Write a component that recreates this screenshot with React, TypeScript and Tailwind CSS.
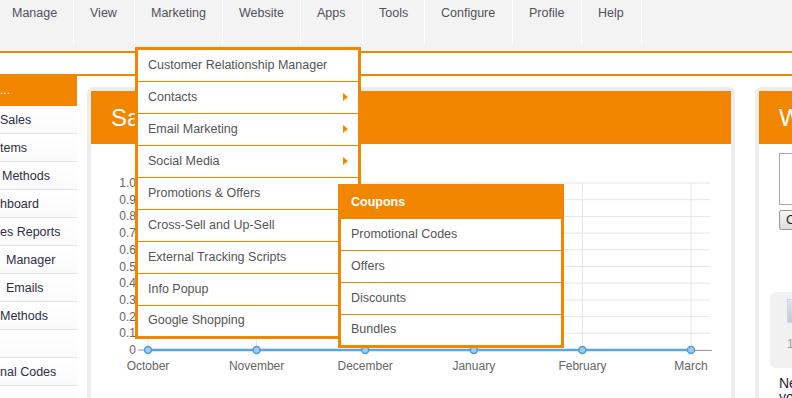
const navItems = [
  { label: 'Manage', cls: 'w-[74px] pl-[12px]' },
  { label: 'View', cls: 'w-[61px] pl-[16px]' },
  { label: 'Marketing', cls: 'w-[88px] pl-[16px]' },
  { label: 'Website', cls: 'w-[78px] pl-[16px]' },
  { label: 'Apps', cls: 'w-[62px] pl-[16px]' },
  { label: 'Tools', cls: 'w-[62px] pl-[16px]' },
  { label: 'Configure', cls: 'w-[88px] pl-[16px]' },
  { label: 'Profile', cls: 'w-[69px] pl-[16px]' },
  { label: 'Help', cls: 'w-[60px] pl-[16px]' },
];

const sideItems = [
  { label: 'Sales', cls: 'pl-0' },
  { label: 'tems', cls: 'pl-0' },
  { label: 'Methods', cls: 'pl-[2px]' },
  { label: 'hboard', cls: 'pl-0' },
  { label: 'es Reports', cls: 'pl-0' },
  { label: 'Manager', cls: 'pl-[6px]' },
  { label: 'Emails', cls: 'pl-[6px]' },
  { label: 'Methods', cls: 'pl-0' },
  { label: '', cls: 'pl-0' },
  { label: 'nal Codes', cls: 'pl-0' },
  { label: '', cls: 'pl-0' },
];

const marketingItems = [
  { label: 'Customer Relationship Manager', sub: false },
  { label: 'Contacts', sub: true },
  { label: 'Email Marketing', sub: true },
  { label: 'Social Media', sub: true },
  { label: 'Promotions & Offers', sub: false },
  { label: 'Cross-Sell and Up-Sell', sub: false },
  { label: 'External Tracking Scripts', sub: false },
  { label: 'Info Popup', sub: false },
  { label: 'Google Shopping', sub: false },
];

const couponItems = ['Promotional Codes', 'Offers', 'Discounts', 'Bundles'];

const months = ['October', 'November', 'December', 'January', 'February', 'March'];
const ticks = [1.0, 0.9, 0.8, 0.7, 0.6, 0.5, 0.4, 0.3, 0.2, 0.1, 0];

function SalesChart() {
  const x = (i: number) => 57 + i * 108.6;
  const y = (v: number) => 206 - v * 167;
  return (
    <svg width="640" height="260" className="block">
      {ticks.map((t) => (
        <g key={t}>
          <line x1="57" x2="619" y1={y(t)} y2={y(t)} stroke="#e6e6e6" strokeWidth="1" />
          <line x1="47" x2="56" y1={y(t)} y2={y(t)} stroke="#999" strokeWidth="1" />
          <text x="45" y={y(t) + 4} textAnchor="end" fontSize="12" fill="#666">
            {t === 0 ? '0' : t.toFixed(1)}
          </text>
        </g>
      ))}
      {months.map((m, i) => (
        <g key={m}>
          <line x1={x(i)} x2={x(i)} y1="39" y2="206" stroke="#e6e6e6" strokeWidth="1" />
          <text x={x(i)} y="226" textAnchor="middle" fontSize="12" fill="#666">
            {m}
          </text>
        </g>
      ))}
      <line x1="57" x2="621" y1="206.5" y2="206.5" stroke="#999" strokeWidth="1" />
      <line x1={x(0)} x2={x(5)} y1="206" y2="206" stroke="#5aa6e4" strokeWidth="2.5" />
      {months.map((m, i) => (
        <circle key={m} cx={x(i)} cy="206" r="3.5" fill="#9ecbf0" stroke="#4c9de0" strokeWidth="1.5" />
      ))}
    </svg>
  );
}

export default function App() {
  return (
    <div className="relative w-[792px] h-[398px] overflow-hidden bg-white font-['Liberation_Sans',Arial,sans-serif]">
      {/* top menu */}
      <nav className="flex h-[50px] bg-[#f3f3f3]">
        {navItems.map((n) => (
          <div key={n.label} className={`${n.cls} h-[44px] shrink-0 border-r border-white pt-[6px] text-[12.5px] leading-[15px] text-[#50505e]`}>
            {n.label}
          </div>
        ))}
      </nav>
      <div className="mt-[1px] h-[25px] border-y-2 border-[#f28600]" />

      <div className="flex">
        {/* sidebar */}
        <aside className="w-[77px] shrink-0 overflow-hidden">
          <div className="h-[30px] bg-[#f28600] text-[12px] leading-[28px] text-white">...</div>
          {sideItems.map((s, i) => (
            <div key={i} className={`${s.cls} flex h-[28px] items-center whitespace-nowrap border-b border-[#e6e6e6] bg-gradient-to-b from-white to-[#fafafa] pt-[1px] text-[12.5px] text-[#2e2e48]`}>
              {s.label}
            </div>
          ))}
        </aside>

        {/* sales panel */}
        <section className="ml-[10px] mt-[11px] w-[648px] shrink-0 rounded-[6px] border-4 border-[#ededed] bg-white">
          <div className="flex h-[53px] items-center bg-[#f28600] pl-[20px] text-[24px] text-white">Sales Chart</div>
          <SalesChart />
        </section>

        {/* right panel */}
        <section className="ml-[20px] mt-[11px] w-[300px] shrink-0 rounded-[6px] border-4 border-[#ededed] bg-white">
          <div className="flex h-[53px] items-center bg-[#f28600] pl-[20px] text-[24px] text-white">What's New</div>
          <div className="ml-[20px] mt-[9px] h-[52px] w-[250px] border border-[#a8a8a8] bg-white" />
          <div className="ml-[20px] mt-[5px] flex h-[20px] w-[70px] items-center rounded-[2px] border border-[#9a9a9a] bg-gradient-to-b from-[#f6f6f6] to-[#dcdcdc] pl-[6px] text-[13px] text-[#222]">
            Comment
          </div>
          <div className="ml-[11px] mt-[62px] h-[76px] w-[260px] rounded-[6px] bg-[#f1f1f1] pl-[17px] pt-[7px]">
            <div className="h-[24px] w-[40px] border border-[#d0d4de] bg-gradient-to-b from-[#dfe4ee] to-[#c3cadb]" />
            <div className="mt-[12px] text-[12px] text-[#999]">1 day ago</div>
          </div>
          <div className="ml-[20px] mt-[8px] text-[14px] leading-[14px] text-[#1e1e3c]">
            New features are available
            <br />
            your store
          </div>
        </section>
      </div>

      {/* marketing dropdown */}
      <div className="absolute left-[135px] top-[47px] w-[226px] border-[3px] border-[#f28600] bg-white">
        {marketingItems.map((m, i) => (
          <div
            key={m.label}
            className={`flex items-center justify-between pb-[1px] pl-[10px] pr-[10px] text-[12.5px] text-[#555] ${i < marketingItems.length - 1 ? 'h-[32px] border-b border-[#f28600]' : 'h-[30px]'}`}
          >
            <span>{m.label}</span>
            {m.sub && <span className="h-0 w-0 border-y-[4.5px] border-l-[5px] border-y-transparent border-l-[#f28600]" />}
          </div>
        ))}
      </div>

      {/* coupons submenu */}
      <div className="absolute left-[338px] top-[184px] w-[226px] border-[3px] border-[#f28600] bg-white">
        <div className="flex h-[32px] items-center bg-[#f28600] pb-[2px] pl-[10px] text-[12.5px] font-bold text-white">Coupons</div>
        {couponItems.map((c, i) => (
          <div
            key={c}
            className={`flex items-center pb-[1px] pl-[10px] text-[12.5px] text-[#555] ${i < couponItems.length - 1 ? 'h-[32px] border-b border-[#f28600]' : 'h-[30px]'}`}
          >
            {c}
          </div>
        ))}
      </div>
    </div>
  );
}
